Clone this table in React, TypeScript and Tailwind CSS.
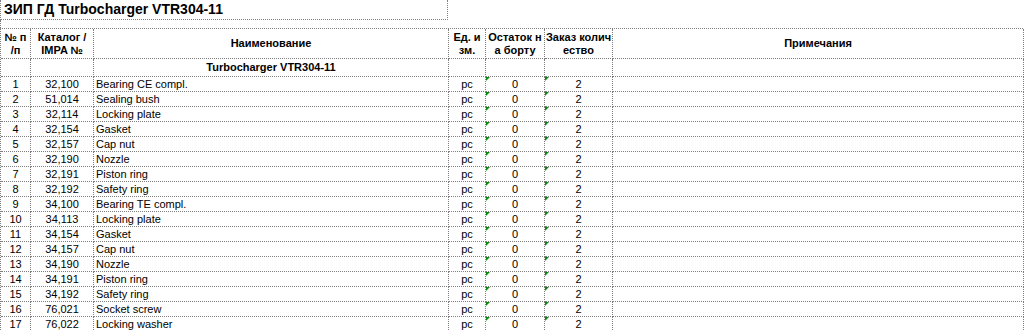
import React from "react";

const rows: [number, string, string][] = [
    [1, "32,100", "Bearing CE compl."],
    [2, "51,014", "Sealing bush"],
    [3, "32,114", "Locking plate"],
    [4, "32,154", "Gasket"],
    [5, "32,157", "Cap nut"],
    [6, "32,190", "Nozzle"],
    [7, "32,191", "Piston ring"],
    [8, "32,192", "Safety ring"],
    [9, "34,100", "Bearing TE compl."],
    [10, "34,113", "Locking plate"],
    [11, "34,154", "Gasket"],
    [12, "34,157", "Cap nut"],
    [13, "34,190", "Nozzle"],
    [14, "34,191", "Piston ring"],
    [15, "34,192", "Safety ring"],
    [16, "76,021", "Socket screw"],
    [17, "76,022", "Locking washer"],
];

const cell =
    "border-r border-b border-dotted border-[#7f7f7f] flex items-center";

function Marker() {
    return (
        <div className="absolute left-0 top-0 w-0 h-0 border-t-[4px] border-t-[#0a8a0a] border-r-[4px] border-r-transparent"></div>
    );
}

function App() {
    return (
        <div
            className="w-[1024px] h-[331px] overflow-hidden bg-white text-black"
            style={{ fontFamily: '"Liberation Sans", Arial, sans-serif' }}
        >
            <div className="w-[448px] h-[20px] border-r border-b border-l border-dotted border-[#7f7f7f] flex items-center pl-[3px] text-[14px] font-bold">
                ЗИП ГД Turbocharger VTR304-11
            </div>
            <div className="h-[8px] border-l border-dotted border-[#7f7f7f]"></div>

            <div className="w-[1023px] grid grid-cols-[30px_63px_355px_37px_59px_68px_411px] border-t border-l border-dotted border-[#7f7f7f] text-[11px]">
                {/* header */}
                <div className={`${cell} h-[30px] justify-center text-center font-bold leading-[13px]`}>
                    № п<br />/п
                </div>
                <div className={`${cell} h-[30px] justify-center text-center font-bold leading-[13px]`}>
                    Каталог /<br />IMPA №
                </div>
                <div className={`${cell} h-[30px] justify-center font-bold`}>
                    Наименование
                </div>
                <div className={`${cell} h-[30px] justify-center text-center font-bold leading-[13px]`}>
                    Ед. и<br />зм.
                </div>
                <div className={`${cell} h-[30px] justify-center text-center font-bold leading-[13px]`}>
                    Остаток н<br />а борту
                </div>
                <div className={`${cell} h-[30px] justify-center text-center font-bold leading-[13px] whitespace-nowrap`}>
                    Заказ колич<br />ество
                </div>
                <div className={`${cell} h-[30px] justify-center font-bold`}>
                    Примечания
                </div>

                {/* group row */}
                <div className={`${cell} h-[18px]`}></div>
                <div className={`${cell} h-[18px]`}></div>
                <div className={`${cell} h-[18px] justify-center font-bold`}>
                    Turbocharger VTR304-11
                </div>
                <div className={`${cell} h-[18px]`}></div>
                <div className={`${cell} h-[18px]`}></div>
                <div className={`${cell} h-[18px]`}></div>
                <div className={`${cell} h-[18px]`}></div>

                {rows.map(([n, code, name]) => (
                    <React.Fragment key={n}>
                        <div className={`${cell} h-[15px] justify-center`}>{n}</div>
                        <div className={`${cell} h-[15px] justify-center`}>{code}</div>
                        <div className={`${cell} h-[15px] pl-[2px]`}>{name}</div>
                        <div className={`${cell} h-[15px] justify-center`}>pc</div>
                        <div className={`${cell} h-[15px] justify-center relative`}>
                            <Marker />0
                        </div>
                        <div className={`${cell} h-[15px] justify-center relative`}>
                            <Marker />2
                        </div>
                        <div className={`${cell} h-[15px]`}></div>
                    </React.Fragment>
                ))}
            </div>
        </div>
    );
}

export default App;
